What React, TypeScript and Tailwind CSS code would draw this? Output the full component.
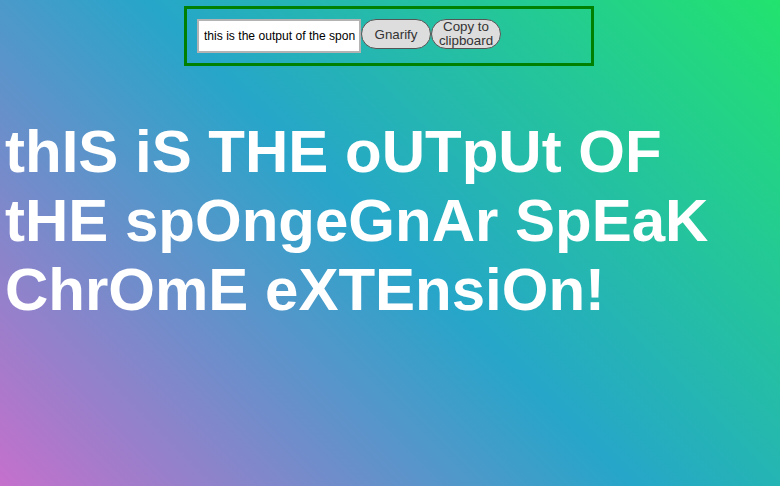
import React from "react";

export default function App() {
  return (
    <div
      className="min-h-screen w-full overflow-hidden bg-[linear-gradient(45deg,#c570cc_0%,#26a6c9_50%,#22e36e_100%)] pt-[6px]"
      style={{ fontFamily: '"Liberation Sans", Arial, sans-serif' }}
    >
      <div className="ml-[184px] w-[410px] h-[60px] border-[3px] border-[#008000] p-[10px] flex items-start">
        <input
          className="w-[164px] h-[34px] border-2 border-[#b3b3b3] bg-white pl-[5px] pr-[2px] text-[12.1px] text-black outline-none"
          style={{ fontFamily: '"Liberation Sans", Arial, sans-serif' }}
          defaultValue="this is the output of the spon"
          readOnly
        />
        <button className="w-[70px] h-[30px] rounded-full border border-[#555] bg-[#dddddd] text-[13.33px] leading-[15px] text-[#333]">
          Gnarify
        </button>
        <button className="w-[70px] h-[30px] rounded-full border border-[#555] bg-[#dddddd] text-[13.33px] leading-[14px] text-[#333]">
          Copy to clipboard
        </button>
      </div>
      <h1 className="mt-[51px] pl-[5px] pr-[8px] text-[60px] font-bold leading-[69px] text-white">
        thIS iS THE oUTpUt OF tHE spOngeGnAr SpEaK ChrOmE eXTEnsiOn!
      </h1>
    </div>
  );
}
